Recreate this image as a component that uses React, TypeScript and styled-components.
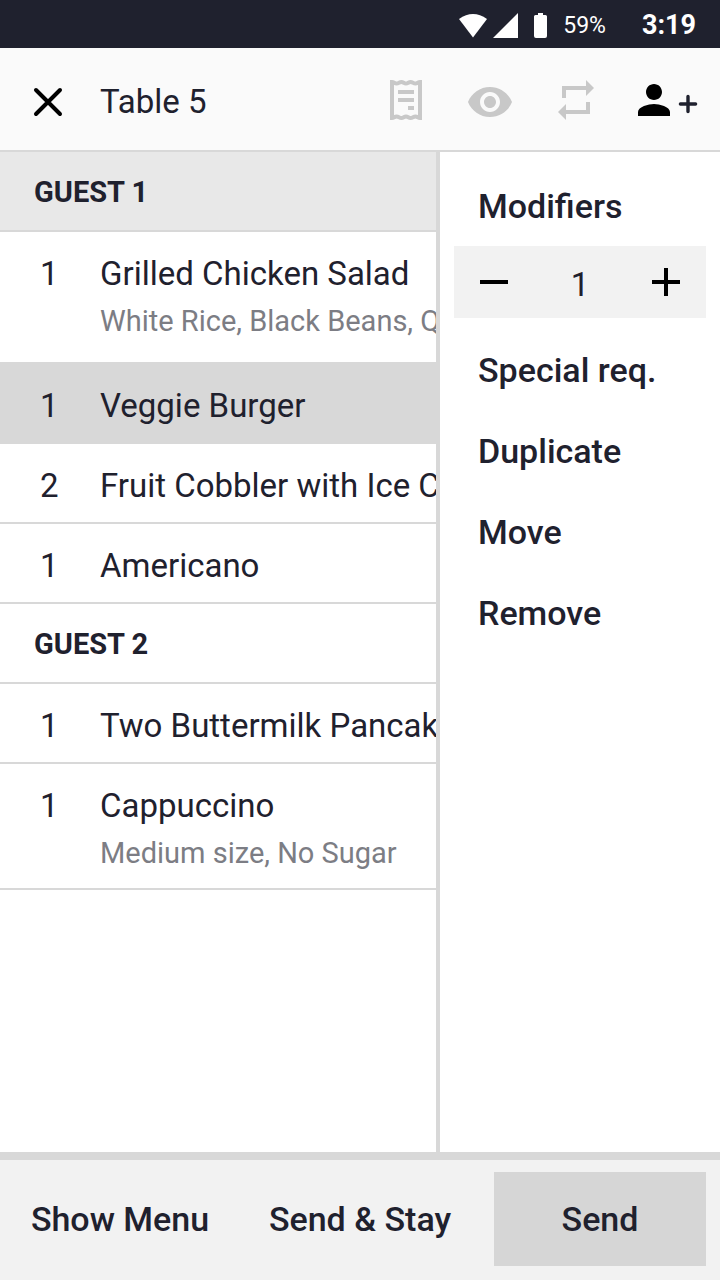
import React from "react";
import styled, { createGlobalStyle } from "styled-components";

const GlobalStyle = createGlobalStyle`
  *, *::before, *::after { box-sizing: border-box; }
  html, body, #root { height: 100%; }
  body {
    margin: 0;
    background: #fff;
    color: #1f212e;
    font-family: Roboto, "Liberation Sans", sans-serif;
    font-size: 33px;
    line-height: 40px;
  }
  button {
    border: 0;
    padding: 0;
    margin: 0;
    background: none;
    color: inherit;
    font: inherit;
    cursor: pointer;
  }
  h1, h2, ul, p { margin: 0; padding: 0; font: inherit; }
  ul { list-style: none; }
  svg { display: block; flex: none; }
`;

const Screen = styled.div`
  display: flex;
  flex-direction: column;
  min-height: 100%;
`;

const StatusBar = styled.div`
  display: flex;
  align-items: center;
  justify-content: flex-end;
  height: 48px;
  padding: 2px 24px 0 0;
  background: #1f212e;
  color: #fff;
`;

const Battery = styled.span`
  margin: 2px 36px 0 13px;
  font-size: 23px;
  line-height: 28px;
`;

const Clock = styled.time`
  font-size: 27px;
  line-height: 32px;
  font-weight: 700;
`;

const Header = styled.header`
  display: flex;
  align-items: center;
  height: 104px;
  padding: 2px 22px 0 24px;
  background: #fafafa;
  border-bottom: 2px solid #d8d8d8;
`;

const Title = styled.h1`
  flex: 1;
  padding: 4px 0 0 28px;
`;

const Actions = styled.div`
  display: flex;
  align-items: center;
  gap: 38px;
`;

const IconButton = styled.button<{ $muted?: boolean }>`
  display: flex;
  align-items: center;
  color: ${(p) => (p.$muted ? "#c8c8c8" : "#000")};
`;

const GuestButton = styled(IconButton)`
  margin-left: -8px;
`;

const Main = styled.main`
  flex: 1;
  display: flex;
`;

const Order = styled.section`
  flex: 1;
  min-width: 0;
  overflow: hidden;
  border-right: 4px solid #d8d8d8;
`;

const GuestHeading = styled.h2<{ $active?: boolean }>`
  height: 80px;
  padding: 20px 34px 0;
  border-bottom: 2px solid #d8d8d8;
  background: ${(p) => (p.$active ? "#e8e8e8" : "#fff")};
  font-size: 29px;
  font-weight: 700;
`;

const ItemRow = styled.button<{ $selected?: boolean; $bottom: number }>`
  display: grid;
  grid-template-columns: 60px 1fr;
  width: 100%;
  padding: 22px 0 ${(p) => p.$bottom}px 40px;
  border-bottom: 2px solid #d8d8d8;
  background: ${(p) => (p.$selected ? "#d8d8d8" : "#fff")};
  text-align: left;
  white-space: nowrap;
`;

const Note = styled.span`
  grid-column: 2;
  padding-top: 7px;
  color: #7c7d84;
  font-size: 29px;
`;

const Panel = styled.aside`
  display: flex;
  flex-direction: column;
  width: 280px;
  padding: 13px 14px;
`;

const PanelAction = styled.button`
  height: 81px;
  padding-left: 24px;
  font-size: 34px;
  font-weight: 500;
  text-align: left;
`;

const Stepper = styled.div`
  display: flex;
  align-items: center;
  justify-content: space-between;
  height: 72px;
  margin-bottom: 11px;
  padding: 0 16px;
  background: #f2f2f2;
`;

const Quantity = styled.output`
  padding-top: 6px;
`;

const Footer = styled.footer`
  display: flex;
  height: 128px;
  padding: 12px 14px 14px 0;
  border-top: 8px solid #d8d8d8;
  background: #f2f2f2;
`;

const FooterButton = styled.button<{ $primary?: boolean }>`
  flex: ${(p) => (p.$primary ? "0 0 212px" : "1 1 0")};
  margin-left: ${(p) => (p.$primary ? 14 : 0)}px;
  background: ${(p) => (p.$primary ? "#d6d6d6" : "transparent")};
  font-size: 34px;
  font-weight: 500;
`;

type GlyphProps = { d: string; x?: number; y?: number; width?: number; children?: React.ReactNode };

function Glyph({ d, x = 0, y = 0, width = 48, children }: GlyphProps) {
  return (
    <svg width={width} height="48" viewBox={`${x} ${y} ${width / 2} 24`} fill="currentColor" aria-hidden="true">
      <path fillRule="evenodd" d={d} />
      {children}
    </svg>
  );
}

const icons = {
  close: "M6 6l12 12M18 6L6 18",
  receiptLines: "M8 7h8v2H8zM8 11h8v2H8zM13 15h3v2h-3z",
  receiptEdge:
    "M5 3c1 0 1.300.8 2.300.8s1.400-.8 2.400-.8 1.300.8 2.300.8 1.300-.8 2.300-.8 1.400.8 2.400.8 1.300-.8 2.300-.8V21c-1 0-1.300-.8-2.300-.8s-1.400.8-2.400.8-1.300-.8-2.300-.8-1.300.8-2.300.8-1.400-.8-2.400-.8-1.300.8-2.300.8z",
  eye: "M12 4.5C7 4.5 2.73 7.61 1 12c1.73 4.39 6 7.5 11 7.5s9.27-3.11 11-7.5c-1.73-4.39-6-7.5-11-7.5zM12 17c-2.76 0-5-2.24-5-5s2.24-5 5-5 5 2.24 5 5-2.24 5-5 5zm0-8c-1.66 0-3 1.34-3 3s1.34 3 3 3 3-1.34 3-3-1.34-3-3-3z",
  repeat: "M7 7h10v3l4-4-4-4v3H5v6h2V7zm10 10H7v-3l-4 4 4 4v-3h12v-6h-2v4z",
  person:
    "M12 12c2.21 0 4-1.79 4-4s-1.79-4-4-4-4 1.79-4 4 1.79 4 4 4zm0 2c-2.67 0-8 1.34-8 4v2h16v-2c0-2.66-5.33-4-8-4z",
  minus: "M5 11h14v2H5z",
  plus: "M5 11h6V5h2v6h6v2h-6v6h-2v-6H5z",
};

type Item = { qty: number; name: string; note?: string; selected?: boolean; bottom?: number };
type Guest = { name: string; active?: boolean; items: Item[] };

const guests: Guest[] = [
  {
    name: "GUEST 1",
    active: true,
    items: [
      { qty: 1, name: "Grilled Chicken Salad", note: "White Rice, Black Beans, Queso", bottom: 21 },
      { qty: 1, name: "Veggie Burger", selected: true },
      { qty: 2, name: "Fruit Cobbler with Ice Cream" },
      { qty: 1, name: "Americano" },
    ],
  },
  {
    name: "GUEST 2",
    items: [
      { qty: 1, name: "Two Buttermilk Pancakes" },
      { qty: 1, name: "Cappuccino", note: "Medium size, No Sugar", bottom: 15 },
    ],
  },
];

export default function App() {
  return (
    <Screen>
      <GlobalStyle />
      <StatusBar>
        <svg width="92" height="30" viewBox="0 0 92 30" fill="#fff" aria-hidden="true">
          <path d="M1 9Q15 -1 29 9L15 27.500z" />
          <path d="M60 3v25H35z" />
          <path d="M80 3h5v2h2.500q1.500 0 1.500 1.500V26q0 2-2 2h-9q-2 0-2-2V6.500Q76 5 77.500 5H80z" />
        </svg>
        <Battery>59%</Battery>
        <Clock>3:19</Clock>
      </StatusBar>
      <Header>
        <IconButton aria-label="Close">
          <svg width="48" height="48" viewBox="0 -1 24 24" fill="none" stroke="currentColor" strokeWidth="2" strokeLinecap="round" aria-hidden="true">
            <path d={icons.close} />
          </svg>
        </IconButton>
        <Title>Table 5</Title>
        <Actions>
          <IconButton $muted aria-label="Receipt">
            <Glyph d={icons.receiptLines} x={-1}>
              <path d={icons.receiptEdge} fill="none" stroke="currentColor" strokeWidth="2" />
            </Glyph>
          </IconButton>
          <IconButton $muted aria-label="Preview"><Glyph d={icons.eye} y={-1} /></IconButton>
          <IconButton $muted aria-label="Swap"><Glyph d={icons.repeat} /></IconButton>
          <GuestButton aria-label="Add guest">
            <Glyph d={icons.person} width={68}>
              <path d="M25.2 14H32.800M29 10.200V17.800" stroke="#1f212e" strokeWidth="1.700" strokeLinecap="round" />
            </Glyph>
          </GuestButton>
        </Actions>
      </Header>
      <Main>
        <Order>
          {guests.map((guest) => (
            <React.Fragment key={guest.name}>
              <GuestHeading $active={guest.active}>{guest.name}</GuestHeading>
              <ul>
                {guest.items.map((item) => (
                  <li key={item.name}>
                    <ItemRow $selected={item.selected} $bottom={item.bottom ?? 16}>
                      <span>{item.qty}</span>
                      <span>{item.name}</span>
                      {item.note && <Note>{item.note}</Note>}
                    </ItemRow>
                  </li>
                ))}
              </ul>
            </React.Fragment>
          ))}
        </Order>
        <Panel>
          <PanelAction>Modifiers</PanelAction>
          <Stepper>
            <IconButton aria-label="Decrease"><Glyph d={icons.minus} /></IconButton>
            <Quantity>1</Quantity>
            <IconButton aria-label="Increase"><Glyph d={icons.plus} /></IconButton>
          </Stepper>
          <PanelAction>Special req.</PanelAction>
          <PanelAction>Duplicate</PanelAction>
          <PanelAction>Move</PanelAction>
          <PanelAction>Remove</PanelAction>
        </Panel>
      </Main>
      <Footer>
        <FooterButton>Show Menu</FooterButton>
        <FooterButton>Send &amp; Stay</FooterButton>
        <FooterButton $primary>Send</FooterButton>
      </Footer>
    </Screen>
  );
}
